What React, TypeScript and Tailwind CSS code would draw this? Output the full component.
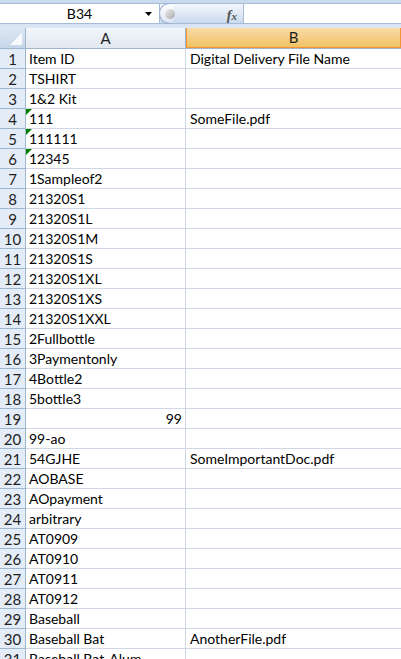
import React from "react";

type Row = { a: string; b?: string; flag?: boolean; num?: boolean };

const rows: Row[] = [
  { a: "Item ID", b: "Digital Delivery File Name" },
  { a: "TSHIRT" },
  { a: "1&2 Kit" },
  { a: "111", b: "SomeFile.pdf", flag: true },
  { a: "111111", flag: true },
  { a: "12345", flag: true },
  { a: "1Sampleof2" },
  { a: "21320S1" },
  { a: "21320S1L" },
  { a: "21320S1M" },
  { a: "21320S1S" },
  { a: "21320S1XL" },
  { a: "21320S1XS" },
  { a: "21320S1XXL" },
  { a: "2Fullbottle" },
  { a: "3Paymentonly" },
  { a: "4Bottle2" },
  { a: "5bottle3" },
  { a: "99", num: true },
  { a: "99-ao" },
  { a: "54GJHE", b: "SomeImportantDoc.pdf" },
  { a: "AOBASE" },
  { a: "AOpayment" },
  { a: "arbitrary" },
  { a: "AT0909" },
  { a: "AT0910" },
  { a: "AT0911" },
  { a: "AT0912" },
  { a: "Baseball" },
  { a: "Baseball Bat", b: "AnotherFile.pdf" },
  { a: "Baseball Bat-Alum" },
];

const FormulaBar = () => (
  <div className="bg-gradient-to-b from-[#c9d9ee] to-[#dbe6f4] pt-[3px] pb-[4px]">
    <div className="flex h-[21px] border-y border-[#a5bcd8] bg-white">
      <div className="relative flex w-[160px] items-center justify-center border-r border-[#a5bcd8]">
        <span className="text-[14px] text-black">B34</span>
        <svg className="absolute left-[145px] top-[8px]" width="8" height="5" viewBox="0 0 8 5">
          <path d="M0 0h7L3.5 4z" fill="#000" />
        </svg>
      </div>
      <div className="relative flex w-[84px] items-center border-r border-[#a5bcd8] bg-gradient-to-b from-[#f4f8fd] via-[#dfe8f5] to-[#cbdaee]">
        <div className="absolute left-[-1px] top-[-1px] h-[21px] w-[14px] rounded-l-full border border-r-0 border-[#9ab1cf] bg-gradient-to-b from-[#ffffff] to-[#dbe5f2]" />
        <div className="absolute left-[5px] top-[5px] h-[10px] w-[10px] rounded-full bg-gradient-to-br from-[#f0f0f0] to-[#a8a8a8]" />
        <span className="absolute right-[6px] top-[1px] font-['Liberation_Serif',serif] text-[14px] font-bold italic text-[#555]">
          f<span className="text-[11px]">x</span>
        </span>
      </div>
      <div className="flex-1" />
    </div>
  </div>
);

const Header = () => (
  <div className="flex h-[21px] border-b border-[#9eb6ce] text-[15px]">
    <div className="relative w-[26px] border-r border-[#9eb6ce] bg-gradient-to-b from-[#dfe8f4] to-[#c6d6ea]">
      <svg className="absolute right-[3px] bottom-[3px]" width="12" height="12" viewBox="0 0 12 12">
        <path d="M12 0V12H0z" fill="#fff" opacity="0.85" />
      </svg>
    </div>
    <div className="flex w-[160px] items-center justify-center border-r border-[#9eb6ce] bg-gradient-to-b from-[#f3f6fb] to-[#e1e8f2] text-[#1f1f1f]">
      A
    </div>
    <div className="flex flex-1 items-center justify-center border-x border-b border-[#f29436] bg-gradient-to-b from-[#f9dba5] to-[#f1c264] text-[#1f1f1f]">
      B
    </div>
  </div>
);

export default function App() {
  return (
    <div className="h-[659px] w-[401px] overflow-hidden bg-white font-['Lato','Open_Sans',sans-serif]">
      <FormulaBar />
      <Header />
      {rows.map((r, i) => (
        <div key={i} className="flex h-[20px] text-[14px] leading-[20px]">
          <div className="w-[26px] border-r border-b border-[#9eb6ce] bg-[#e4ecf7] text-center text-[15px] text-[#1f1f1f]">
            {i + 1}
          </div>
          <div
            className={`relative w-[160px] border-r border-b border-[#d0d7e5] px-[3px] text-black ${r.num ? "text-right" : ""}`}
          >
            {r.flag && (
              <svg className="absolute left-0 top-0" width="6" height="6" viewBox="0 0 6 6">
                <path d="M0 0H6L0 6z" fill="#008000" />
              </svg>
            )}
            {r.a}
          </div>
          <div className="flex-1 border-b border-[#d0d7e5] px-[4px] text-black">{r.b}</div>
        </div>
      ))}
    </div>
  );
}
